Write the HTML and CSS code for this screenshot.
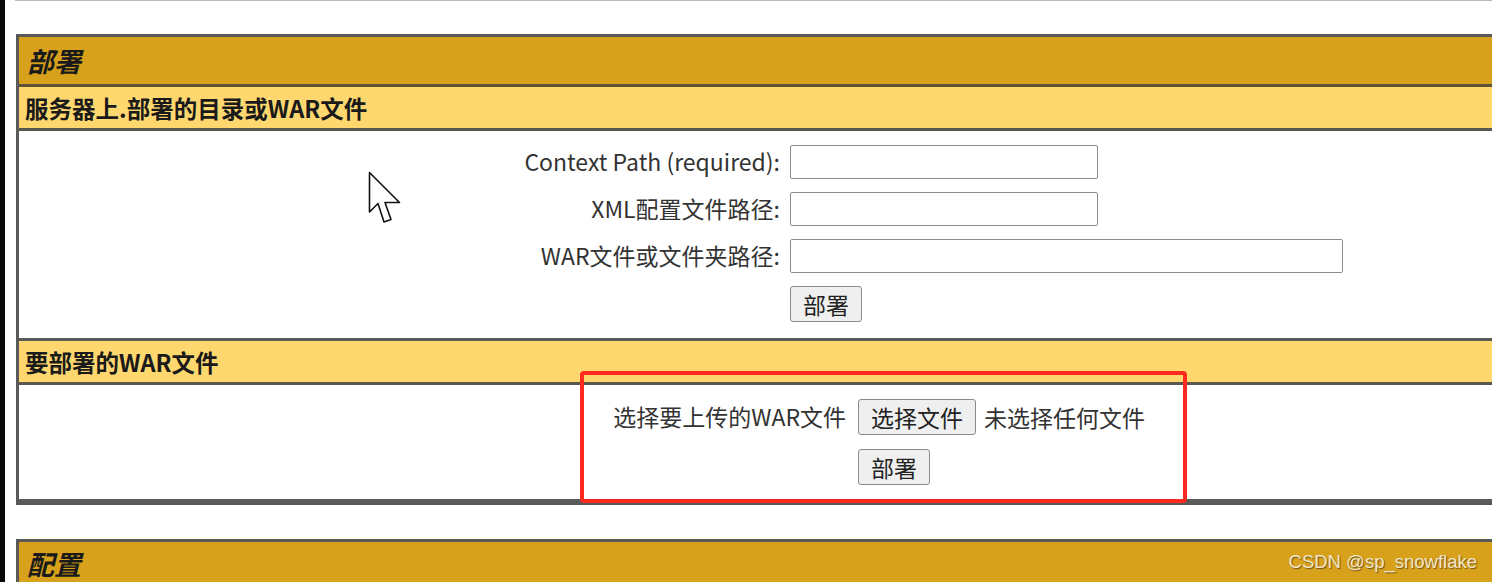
FILE: index.html
```html
<!DOCTYPE html>
<html lang="zh-CN">
<head>
<meta charset="utf-8">
<title>部署</title>
<link rel="stylesheet" href="styles.css">
</head>
<body>
<div class="edge"></div>
<div class="page">
  <div class="topline"></div>

  <div class="panel">
    <div class="hd-main">部署</div>
    <div class="hd-sub">服务器上.部署的目录或WAR文件</div>
    <div class="body body-dir">
      <div class="form-grid">
        <label class="lbl">Context Path (required):</label>
        <div class="field"><input class="txt short" type="text"></div>
        <label class="lbl">XML配置文件路径:</label>
        <div class="field"><input class="txt short" type="text"></div>
        <label class="lbl">WAR文件或文件夹路径:</label>
        <div class="field"><input class="txt long" type="text"></div>
        <div></div>
        <div class="field"><button class="btn" type="button">部署</button></div>
      </div>
    </div>
    <div class="hd-sub">要部署的WAR文件</div>
    <div class="body body-war">
      <div class="upload-grid">
        <div class="lbl">选择要上传的WAR文件</div>
        <div class="file-row"><button class="btn" type="button">选择文件</button><span class="nofile">未选择任何文件</span></div>
        <div></div>
        <div class="field"><button class="btn" type="button">部署</button></div>
      </div>
    </div>
  </div>

  <div class="panel panel-next">
    <div class="hd-main">配置</div>
  </div>
</div>

<div class="highlight"></div>
<svg class="cursor" width="36" height="56" viewBox="0 0 36 56" aria-hidden="true">
  <path d="M1.5 1.5 L1.5 41 L10 32.5 L16 51 L23 48.5 L17 31.5 L31.5 31.5 Z" fill="#fff" stroke="#111" stroke-width="1.6" stroke-linejoin="round"/>
</svg>
<div class="watermark">CSDN @sp_snowflake</div>
</body>
</html>
```

FILE: styles.css
```css
html, body {
  margin: 0;
  padding: 0;
}
body {
  width: 1492px;
  height: 582px;
  overflow: hidden;
  display: flex;
  background: #fff;
  font-family: "Noto Sans CJK SC", "Noto Sans", sans-serif;
  color: #222;
  position: relative;
}
.edge {
  width: 5px;
  flex: none;
  background: #0a0a0a;
}
.page {
  flex: 1;
  padding-left: 11px;
  overflow: hidden;
}
.topline {
  height: 1px;
  background: #b8b8b8;
  margin-left: -1px;
  margin-bottom: 33px;
}
.panel {
  width: 1600px;
  border: 3px solid #595959;
  border-right: 0;
  box-sizing: border-box;
}
.panel-next {
  margin-top: 34px;
}
.hd-main {
  height: 47px;
  background: #d8a11b;
  border-bottom: 3px solid #5b5237;
  display: flex;
  align-items: center;
  padding-left: 8px;
  font-size: 27px;
  font-weight: 700;
  font-style: italic;
  color: #1a1a1a;
}
.panel-next .hd-main {
  align-items: flex-start;
  padding-top: 6px;
  box-sizing: border-box;
  line-height: 1.2;
}
.hd-sub {
  height: 41px;
  background: #ffd76f;
  border-bottom: 3px solid #5a574e;
  display: flex;
  align-items: center;
  padding-left: 6px;
  font-size: 23.5px;
  font-weight: 700;
  color: #1a1a1a;
}
.body {
  background: #fff;
  border-bottom: 3px solid #5a5a5a;
  box-sizing: border-box;
  font-size: 23px;
}
.body-dir {
  height: 210px;
  padding-top: 14px;
}
.body-war {
  height: 117px;
  padding-top: 14px;
}
.form-grid {
  display: grid;
  grid-template-columns: 761px auto;
  column-gap: 10px;
  row-gap: 13px;
  align-items: center;
  justify-content: start;
}
.upload-grid {
  display: grid;
  grid-template-columns: 827px auto;
  column-gap: 12px;
  row-gap: 14px;
  align-items: center;
  justify-content: start;
}
.lbl {
  text-align: right;
  color: #333;
  line-height: 1.3;
}
.field {
  display: flex;
  align-items: center;
}
.txt {
  height: 34px;
  box-sizing: border-box;
  border: 1px solid #8c8c8c;
  border-radius: 2px;
  background: #fff;
  padding: 0 4px;
  font: inherit;
}
.short { width: 308px; }
.long { width: 553px; }
.btn {
  height: 36px;
  box-sizing: border-box;
  padding: 0 12px;
  border: 1px solid #8a8a8a;
  border-radius: 3px;
  background: #efefef;
  font-family: inherit;
  font-size: 23px;
  color: #222;
  line-height: 1;
}
.file-row {
  display: flex;
  align-items: center;
  gap: 8px;
  color: #333;
}
.highlight {
  position: absolute;
  left: 580px;
  top: 371px;
  width: 607px;
  height: 132px;
  box-sizing: border-box;
  border: 4px solid #ff2a1f;
  border-radius: 4px;
}
.cursor {
  position: absolute;
  left: 368px;
  top: 171px;
}
.watermark {
  position: absolute;
  right: 15px;
  bottom: 9px;
  font-family: "Liberation Sans", Arial, sans-serif;
  font-size: 18.5px;
  color: #f1e6c6;
  text-shadow: 1px 1px 1px #6e5416;
}
```
